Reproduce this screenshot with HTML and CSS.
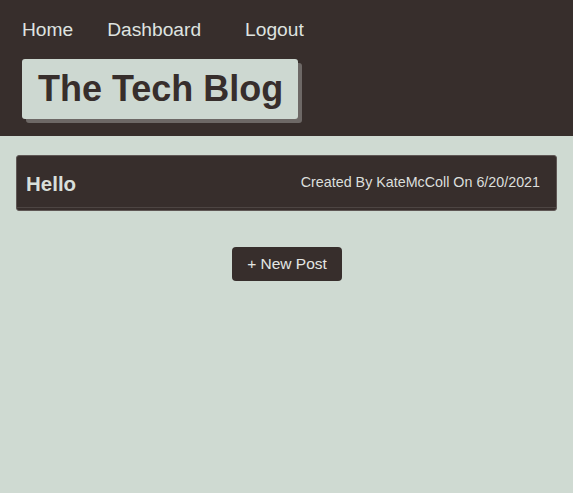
FILE: index.html
```html
<!DOCTYPE html>
<html>
<head>
<meta charset="utf-8">
<link rel="stylesheet" href="styles.css">
</head>
<body>
<header class="site-header">
  <nav class="nav">
    <a class="nav-link home" href="#">Home</a>
    <a class="nav-link dash" href="#">Dashboard</a>
    <a class="nav-link" href="#">Logout</a>
  </nav>
  <div class="title-box"><h1 class="title">The Tech Blog</h1></div>
</header>
<main class="content">
  <article class="card">
    <div class="card-header">
      <h2 class="post-title">Hello</h2>
      <span class="meta">Created By KateMcColl On 6/20/2021</span>
    </div>
    <div class="card-body"></div>
  </article>
  <div class="actions">
    <button class="btn">+ New Post</button>
  </div>
</main>
</body>
</html>
```
FILE: styles.css
```css
html, body {
  margin: 0;
  padding: 0;
  background: #cfdad2;
  font-family: "Liberation Sans", Arial, sans-serif;
}
.site-header {
  background: #372e2c;
  height: 136px;
  box-sizing: border-box;
  padding: 19px 22px 0;
}
.nav {
  display: flex;
  height: 22px;
  align-items: center;
}
.nav-link {
  color: #dfe3e0;
  text-decoration: none;
  font-size: 19.2px;
}
.nav-link.home { margin-right: 34px; }
.nav-link.dash { margin-right: 44px; }
.title-box {
  display: inline-block;
  margin-top: 18px;
  background: #cdd8d1;
  border-radius: 3px;
  box-shadow: 4px 4px 0 #6d6866;
  padding: 0 15px 0 16px;
  height: 60px;
}
.title {
  margin: 0;
  font-size: 36px;
  line-height: 60px;
  font-weight: bold;
  color: #372e2c;
}
.content {
  padding: 19px 16px 0;
}
.card {
  background: #372e2c;
  border: 1px solid #5f5755;
  border-radius: 3px;
  height: 56px;
  box-sizing: border-box;
  display: flex;
  flex-direction: column;
}
.card-header {
  display: flex;
  align-items: center;
  justify-content: space-between;
  padding: 0 16px 0 9px;
  height: 51px;
  border-bottom: 1px solid #4d4543;
}
.post-title {
  margin: 0;
  font-size: 20.5px;
  font-weight: bold;
  color: #d7dfda;
  padding-top: 4px;
}
.meta {
  font-size: 14.3px;
  color: #dcdfdc;
  padding-top: 1px;
}
.actions {
  display: flex;
  justify-content: center;
  margin-top: 36px;
}
.btn {
  background: #372e2c;
  color: #e3e6e3;
  border: none;
  border-radius: 4px;
  height: 34px;
  padding: 0 15px 0 15px;
  font-family: "Liberation Sans", Arial, sans-serif;
  font-size: 15.5px;
  margin-left: 1px;
}
```
